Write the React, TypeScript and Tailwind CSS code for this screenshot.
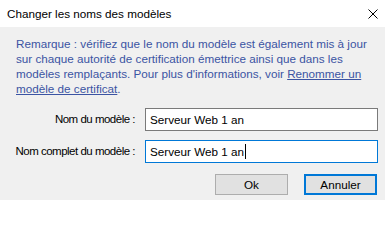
import React from 'react';

const font = { fontFamily: '"Liberation Sans", Arial, sans-serif' };

const CloseIcon: React.FC = () => (
  <svg width="10" height="10" viewBox="0 0 10 10" className="block">
    <path d="M0.5 0.5 L9.5 9.5 M9.5 0.5 L0.5 9.5" stroke="#000" strokeWidth="1" fill="none" />
  </svg>
);

const Field: React.FC<{ label: string; value: string; focused?: boolean }> = ({ label, value, focused }) => (
  <div className="flex h-[23px] shrink-0 items-center">
    <div className="flex w-[137px] justify-end whitespace-nowrap pr-[2px] text-[11.5px] tracking-[-0.5px] text-black">
      {label}
    </div>
    <div
      className={
        focused
          ? 'ml-[8px] flex h-[23px] w-[233px] items-center border border-[#0078d7] bg-white pl-[4px] text-[11.7px] text-black'
          : 'ml-[8px] flex h-[23px] w-[233px] items-center border border-[#7a7a7a] bg-white pl-[4px] text-[11.7px] text-black'
      }
    >
      <span className="whitespace-nowrap">{value}</span>
      {focused && <span className="ml-[1px] inline-block h-[15px] w-[1px] bg-black" />}
    </div>
  </div>
);

const App: React.FC = () => {
  return (
    <div className="flex h-[200px] w-[385px] flex-col overflow-hidden bg-[#f0f0f0]" style={font}>
      {/* title bar */}
      <div className="flex h-[27px] shrink-0 items-center justify-between bg-white pl-[7px] pr-[7px]">
        <span className="text-[11.7px] text-black">Changer les noms des modèles</span>
        <CloseIcon />
      </div>

      {/* note */}
      <div className="shrink-0 whitespace-nowrap pl-[16px] pt-[9px] text-[11.7px] leading-[15px] text-[#3b54a3]">
        <div>Remarque : vérifiez que le nom du modèle est également mis à jour</div>
        <div>sur chaque autorité de certification émettrice ainsi que dans les</div>
        <div>
          modèles remplaçants. Pour plus d'informations, voir{' '}
          <span className="underline">Renommer un</span>
        </div>
        <div>
          <span className="underline">modèle de certificat</span>.
        </div>
      </div>

      {/* fields */}
      <div className="mt-[12px] flex shrink-0 flex-col gap-[9px]">
        <Field label="Nom du modèle :" value="Serveur Web 1 an" />
        <Field label="Nom complet du modèle :" value="Serveur Web 1 an" focused />
      </div>

      {/* buttons */}
      <div className="mt-[11px] flex shrink-0 justify-end gap-[16px] pr-[8px]">
        <button className="h-[21px] w-[73px] border border-[#adadad] bg-[#e1e1e1] text-[11.7px] text-black">
          Ok
        </button>
        <button className="h-[21px] w-[73px] border-2 border-[#0078d7] bg-[#e1e1e1] text-[11.7px] text-black">
          Annuler
        </button>
      </div>
    </div>
  );
};

export default App;
